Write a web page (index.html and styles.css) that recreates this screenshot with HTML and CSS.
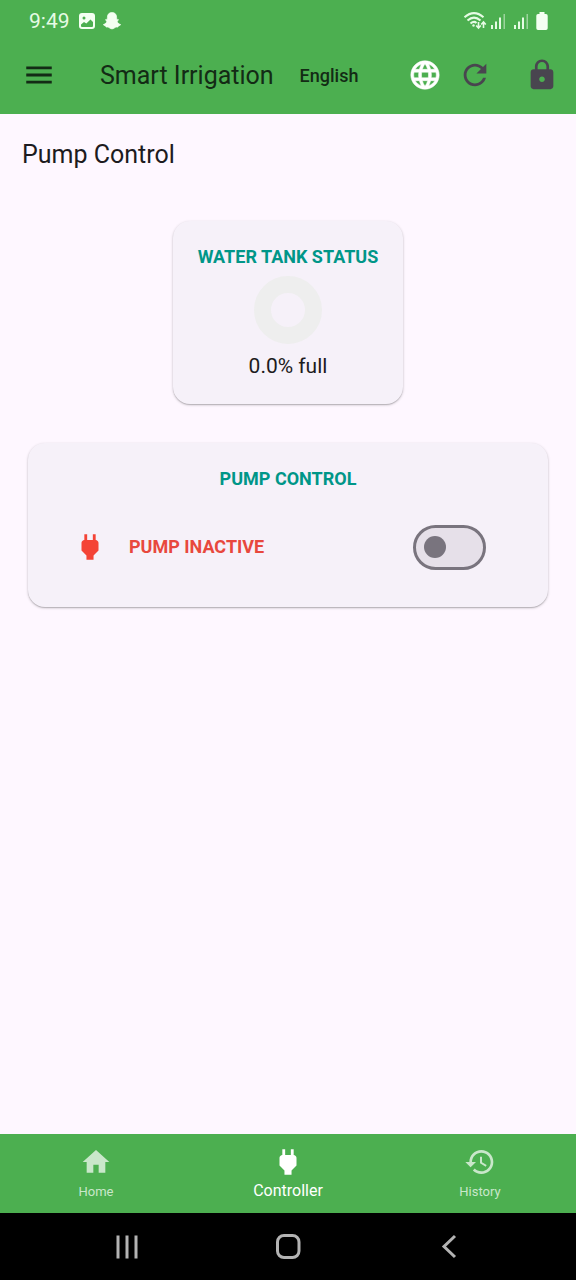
FILE: index.html
```html
<!DOCTYPE html>
<html lang="en">
<head>
<meta charset="utf-8">
<meta name="viewport" content="width=device-width, initial-scale=1">
<title>Smart Irrigation</title>
<link rel="stylesheet" href="styles.css">
</head>
<body>
<header class="top">
  <div class="status-bar">
    <span class="clock">9:49</span>
    <svg class="status-photo" viewBox="0 0 16 16" width="16" height="16" aria-hidden="true">
      <rect width="16" height="16" rx="3" fill="#f4fff2"/>
      <circle cx="5" cy="5" r="1.5" fill="#4caf50"/>
      <path d="M2 13V11.500L5 9l2.300 1.600L11.500 6.500 14 9v4q0 1-1 1H3q-1 0-1-1z" fill="#4caf50"/>
    </svg>
    <svg class="status-ghost" viewBox="0 0 18 18" width="18" height="18" aria-hidden="true">
      <path d="M9 .5c3 0 4.600 2.100 4.600 4.700v2.100c.6.3 1.600-.2 1.800.4.2.8-1.200 1-1.200 1.900.4 1.500 1.900 2.500 3.300 2.900.4.700-1.400 1.200-2.100 1.400-.3.500-.1 1.100-.8 1.200-.9 0-1.900-.2-2.600.4-.8.600-1.600 1.400-3 1.400s-2.200-.8-3-1.400c-.7-.6-1.700-.4-2.600-.4-.7-.1-.5-.7-.8-1.200-.7-.2-2.500-.7-2.100-1.400 1.400-.4 2.900-1.400 3.300-2.900 0-.9-1.400-1.100-1.200-1.900.2-.6 1.200-.1 1.800-.4V5.200C4.400 2.600 6 .5 9 .5z" fill="#f4fff2" stroke="#f4fff2" stroke-width=".7"/>
    </svg>
    <svg class="status-wifi" viewBox="0 0 24 20" width="24" height="20" fill="none" stroke="#e6fbe4" stroke-width="2" aria-hidden="true">
      <path d="M1.500 6.200Q11 -2 20.500 6.200M4.500 9.500Q11 3.800 17.500 9.500M7.500 12.500Q11 9.600 13.500 12"/>
      <circle cx="10.500" cy="14.500" r="1.200" fill="#e6fbe4" stroke="none"/>
      <path d="M15.500 11v6M13.200 14.500l2.300 2.500 2.300-2.500M20.500 17v-6M18.200 13.500l2.300-2.500 2.300 2.500" stroke-width="1.600"/>
    </svg>
    <svg class="status-signal" viewBox="0 0 16 16" width="16" height="16" aria-hidden="true">
      <path d="M1 12h2v4H1zM5 8.500h2V16H5zM9 4.500h2V16H9z" fill="#e6fbe4"/>
      <path d="M13.500 1H15v15h-1.500z" fill="#9bd49c"/>
    </svg>
    <svg class="status-signal" viewBox="0 0 16 16" width="16" height="16" aria-hidden="true">
      <path d="M1 12h2v4H1zM5 8.500h2V16H5zM9 4.500h2V16H9z" fill="#e6fbe4"/>
      <path d="M13.500 1H15v15h-1.500z" fill="#9bd49c"/>
    </svg>
    <svg class="status-battery" viewBox="0 0 12 18" width="12" height="18" aria-hidden="true">
      <path d="M3.500 0h5v2H10q1.700 0 1.700 1.700v12.600Q11.700 18 10 18H2Q.3 18 .3 16.300V3.700Q.3 2 2 2h1.500z" fill="#f4fff2"/>
    </svg>
  </div>
  <div class="app-bar">
    <button class="icon-button menu-button" type="button" aria-label="Open menu">
      <svg class="icon" viewBox="0 0 24 24" aria-hidden="true"><path d="M3 18h18v-2H3v2zm0-5h18v-2H3v2zm0-7v2h18V6H3z"/></svg>
    </button>
    <h1 class="app-title">Smart Irrigation</h1>
    <span class="language">English</span>
    <div class="actions">
      <button class="icon-button globe-button" type="button" aria-label="Change language">
        <svg class="icon" viewBox="0 0 24 24" aria-hidden="true"><path d="M11.990 2C6.470 2 2 6.480 2 12s4.470 10 9.990 10C17.520 22 22 17.520 22 12S17.520 2 11.990 2zm6.930 6h-2.950c-.32-1.250-.78-2.450-1.380-3.560 1.840.63 3.370 1.910 4.330 3.560zM12 4.040c.83 1.200 1.480 2.530 1.910 3.960h-3.820c.43-1.430 1.080-2.760 1.910-3.960zM4.260 14C4.100 13.360 4 12.690 4 12s.1-1.360.26-2h3.380c-.08.66-.14 1.320-.14 2s.06 1.340.14 2H4.260zm.82 2h2.950c.32 1.250.78 2.450 1.380 3.560-1.840-.63-3.370-1.900-4.330-3.560zm2.950-8H5.080c.96-1.660 2.490-2.930 4.330-3.560C8.810 5.550 8.350 6.750 8.030 8zM12 19.960c-.83-1.200-1.480-2.530-1.910-3.960h3.820c-.43 1.430-1.080 2.760-1.910 3.960zM14.340 14H9.660c-.09-.66-.16-1.320-.16-2s.07-1.350.16-2h4.680c.09.65.16 1.320.16 2s-.07 1.340-.16 2zm.25 5.560c.6-1.110 1.060-2.310 1.380-3.560h2.950c-.96 1.650-2.490 2.930-4.330 3.560zM16.360 14c.08-.66.14-1.320.14-2s-.06-1.340-.14-2h3.380c.16.640.26 1.310.26 2s-.1 1.360-.26 2h-3.380z"/></svg>
      </button>
      <button class="icon-button" type="button" aria-label="Refresh">
        <svg class="icon" viewBox="0 0 24 24" aria-hidden="true"><path d="M17.650 6.350C16.200 4.900 14.210 4 12 4c-4.420 0-7.990 3.580-7.990 8s3.570 8 7.990 8c3.730 0 6.840-2.550 7.730-6h-2.080c-.82 2.330-3.040 4-5.650 4-3.310 0-6-2.690-6-6s2.690-6 6-6c1.660 0 3.140.69 4.220 1.780L13 11h7V4l-2.350 2.350z"/></svg>
      </button>
      <button class="icon-button lock-button" type="button" aria-label="Lock">
        <svg class="icon" viewBox="0 0 24 24" aria-hidden="true"><path d="M18 8h-1V6c0-2.760-2.240-5-5-5S7 3.240 7 6v2H6c-1.100 0-2 .9-2 2v10c0 1.100.9 2 2 2h12c1.100 0 2-.9 2-2V10c0-1.100-.9-2-2-2zm-6 9c-1.100 0-2-.9-2-2s.9-2 2-2 2 .9 2 2-.9 2-2 2zm3.100-9H8.900V6c0-1.710 1.390-3.100 3.100-3.100 1.710 0 3.100 1.390 3.100 3.100v2z"/></svg>
      </button>
    </div>
  </div>
</header>

<main class="content">
  <h2 class="page-title">Pump Control</h2>
  <section class="card tank-card">
    <h3 class="card-title">WATER TANK STATUS</h3>
    <svg class="gauge" viewBox="0 0 68 68" role="img" aria-label="Tank level"><circle cx="34" cy="34" r="25.500" fill="none" stroke="#eeeeee" stroke-width="17"/></svg>
    <p class="level">0.0% full</p>
  </section>
  <section class="card pump-card">
    <h3 class="card-title">PUMP CONTROL</h3>
    <div class="pump-row">
      <svg class="icon pump-icon" viewBox="0 0 24 24" aria-hidden="true"><path d="M16.010 7L16 3h-2v4h-4V3H8v4h-.01C7 6.990 6 7.990 6 8.990v5.490L9.500 18v3h5v-3l3.500-3.510v-5.500c0-1-1-2-1.990-1.990z"/></svg>
      <label class="pump-state" for="pump-switch">PUMP INACTIVE</label>
      <input class="switch" id="pump-switch" type="checkbox" role="switch">
    </div>
  </section>
</main>

<nav class="tabs" aria-label="Main">
  <a class="tab" href="#home">
    <svg class="tab-icon" viewBox="0 0 24 24" aria-hidden="true"><path d="M10 20v-6h4v6h5v-8h3L12 3 2 12h3v8z"/></svg>
    <span>Home</span>
  </a>
  <a class="tab tab-active" href="#controller" aria-current="page">
    <svg class="tab-icon" viewBox="0 0 24 24" aria-hidden="true"><path d="M16.010 7L16 3h-2v4h-4V3H8v4h-.01C7 6.990 6 7.990 6 8.990v5.490L9.500 18v3h5v-3l3.500-3.510v-5.500c0-1-1-2-1.990-1.990z"/></svg>
    <span>Controller</span>
  </a>
  <a class="tab" href="#history">
    <svg class="tab-icon" viewBox="0 0 24 24" aria-hidden="true"><path d="M13 3c-4.970 0-9 4.030-9 9H1l3.890 3.890.07.14L9 12H6c0-3.870 3.130-7 7-7s7 3.130 7 7-3.130 7-7 7c-1.930 0-3.680-.79-4.940-2.060l-1.420 1.420C8.270 19.990 10.510 21 13 21c4.970 0 9-4.030 9-9s-4.030-9-9-9zm-1 5v5l4.280 2.540.72-1.210-3.500-2.080V8H12z"/></svg>
    <span>History</span>
  </a>
</nav>

<div class="system-nav">
  <button class="system-button" type="button" aria-label="Recent apps">
    <svg viewBox="0 0 28 28" width="28" height="28" aria-hidden="true"><path d="M5 2.500v23M14 2.500v23M23 2.500v23" stroke="#b3b3b3" stroke-width="3" fill="none"/></svg>
  </button>
  <button class="system-button" type="button" aria-label="Home screen">
    <svg viewBox="0 0 28 28" width="28" height="28" aria-hidden="true"><rect x="3.500" y="2.500" width="21.500" height="22" rx="6.500" stroke="#b3b3b3" stroke-width="3" fill="none"/></svg>
  </button>
  <button class="system-button" type="button" aria-label="Back">
    <svg viewBox="0 0 28 28" width="28" height="28" aria-hidden="true"><path d="M20 3L9 13.500l11 10.500" stroke="#b3b3b3" stroke-width="3" fill="none"/></svg>
  </button>
</div>
</body>
</html>
```
FILE: styles.css
```css
* {
  box-sizing: border-box;
}

body {
  margin: 0;
  min-height: 100vh;
  display: flex;
  flex-direction: column;
  background: #fef7ff;
  color: #1d1b20;
  font-family: Roboto, "Noto Sans", sans-serif;
}

h1, h2, h3, p {
  margin: 0;
}

button {
  border: 0;
  padding: 0;
  background: none;
  color: inherit;
  font: inherit;
}

.top {
  background: #4caf50;
}

.status-bar {
  display: flex;
  align-items: center;
  height: 36px;
  padding: 6px 28px 0 29px;
}

.clock {
  color: #e6fbe4;
  font-size: 21px;
  line-height: 28px;
}

.status-photo {
  margin-left: 9px;
}

.status-ghost {
  margin-left: 8px;
}

.status-wifi {
  margin-left: auto;
}

.status-signal {
  margin-left: 3px;
  margin-right: 4px;
}

.status-battery {
  margin-left: 3px;
}

.app-bar {
  display: flex;
  align-items: center;
  min-height: 78px;
}

.icon {
  display: block;
  width: 34px;
  height: 34px;
  fill: currentColor;
}

.icon-button {
  display: grid;
  place-items: center;
  width: 50px;
  height: 50px;
  color: #49454f;
}

.menu-button {
  width: 78px;
  color: #132b15;
}

.globe-button {
  color: #ffffff;
  stroke: #ffffff;
  stroke-width: 0.4;
}

.lock-button {
  width: 68px;
  margin-left: 8px;
}

.app-title {
  margin-left: 22px;
  padding-top: 2px;
  color: #132b15;
  font-size: 25px;
  font-weight: 400;
  line-height: 32px;
}

.language {
  margin-left: 26px;
  padding-top: 2px;
  color: #132b15;
  font-size: 18px;
  font-weight: 500;
  line-height: 24px;
}

.actions {
  display: flex;
  margin-left: auto;
}

.content {
  flex: 1;
  display: flex;
  flex-direction: column;
  padding: 25px 28px;
}

.page-title {
  margin-left: -6px;
  font-size: 25px;
  font-weight: 400;
  line-height: 32px;
}

.card {
  display: flex;
  flex-direction: column;
  align-items: center;
  padding: 24px 25px;
  border-radius: 17px;
  background: #f6f1f9;
  box-shadow: 0 1px 3px rgba(0, 0, 0, 0.2), 0 1px 1px rgba(0, 0, 0, 0.16);
}

.tank-card {
  align-self: center;
  margin-top: 50px;
}

.card-title {
  color: #009688;
  font-size: 18px;
  font-weight: 700;
  line-height: 24px;
}

.gauge {
  width: 68px;
  height: 68px;
  margin-top: 7px;
}

.level {
  margin-top: 8px;
  font-size: 21px;
  line-height: 28px;
}

.pump-card {
  margin-top: 39px;
}

.pump-row {
  display: flex;
  align-items: center;
  align-self: stretch;
  height: 72px;
  margin-top: 20px;
  padding: 0 37px 0 20px;
}

.pump-icon {
  color: #f44336;
}

.pump-state {
  margin-left: 22px;
  color: #e8483d;
  font-size: 18px;
  font-weight: 700;
  line-height: 24px;
}

.switch {
  appearance: none;
  display: flex;
  align-items: center;
  width: 73px;
  height: 45px;
  margin: 0 0 0 auto;
  padding: 0 8px;
  border: 3px solid #79747e;
  border-radius: 23px;
  background: #e6e0e9;
}

.switch::before {
  content: "";
  width: 22px;
  height: 22px;
  border-radius: 50%;
  background: #79747e;
}

.switch:checked {
  justify-content: flex-end;
}

.tabs {
  display: grid;
  grid-template-columns: repeat(3, 1fr);
  min-height: 79px;
  background: #4caf50;
}

.tab {
  display: flex;
  flex-direction: column;
  align-items: center;
  padding-top: 12px;
  color: #c9e7ca;
  font-size: 13px;
  line-height: 20px;
  text-decoration: none;
}

.tab-icon {
  width: 32px;
  height: 32px;
  margin-bottom: 4px;
  fill: currentColor;
}

.tab-active {
  padding-top: 11px;
  color: #ffffff;
  font-size: 16px;
}

.tab-active .tab-icon {
  width: 34px;
  height: 34px;
  margin-bottom: 2px;
}

.system-nav {
  display: flex;
  align-items: center;
  justify-content: center;
  gap: 94px;
  height: 67px;
  background: #000000;
}

.system-button {
  display: grid;
  place-items: center;
  width: 67px;
  height: 67px;
}
```
